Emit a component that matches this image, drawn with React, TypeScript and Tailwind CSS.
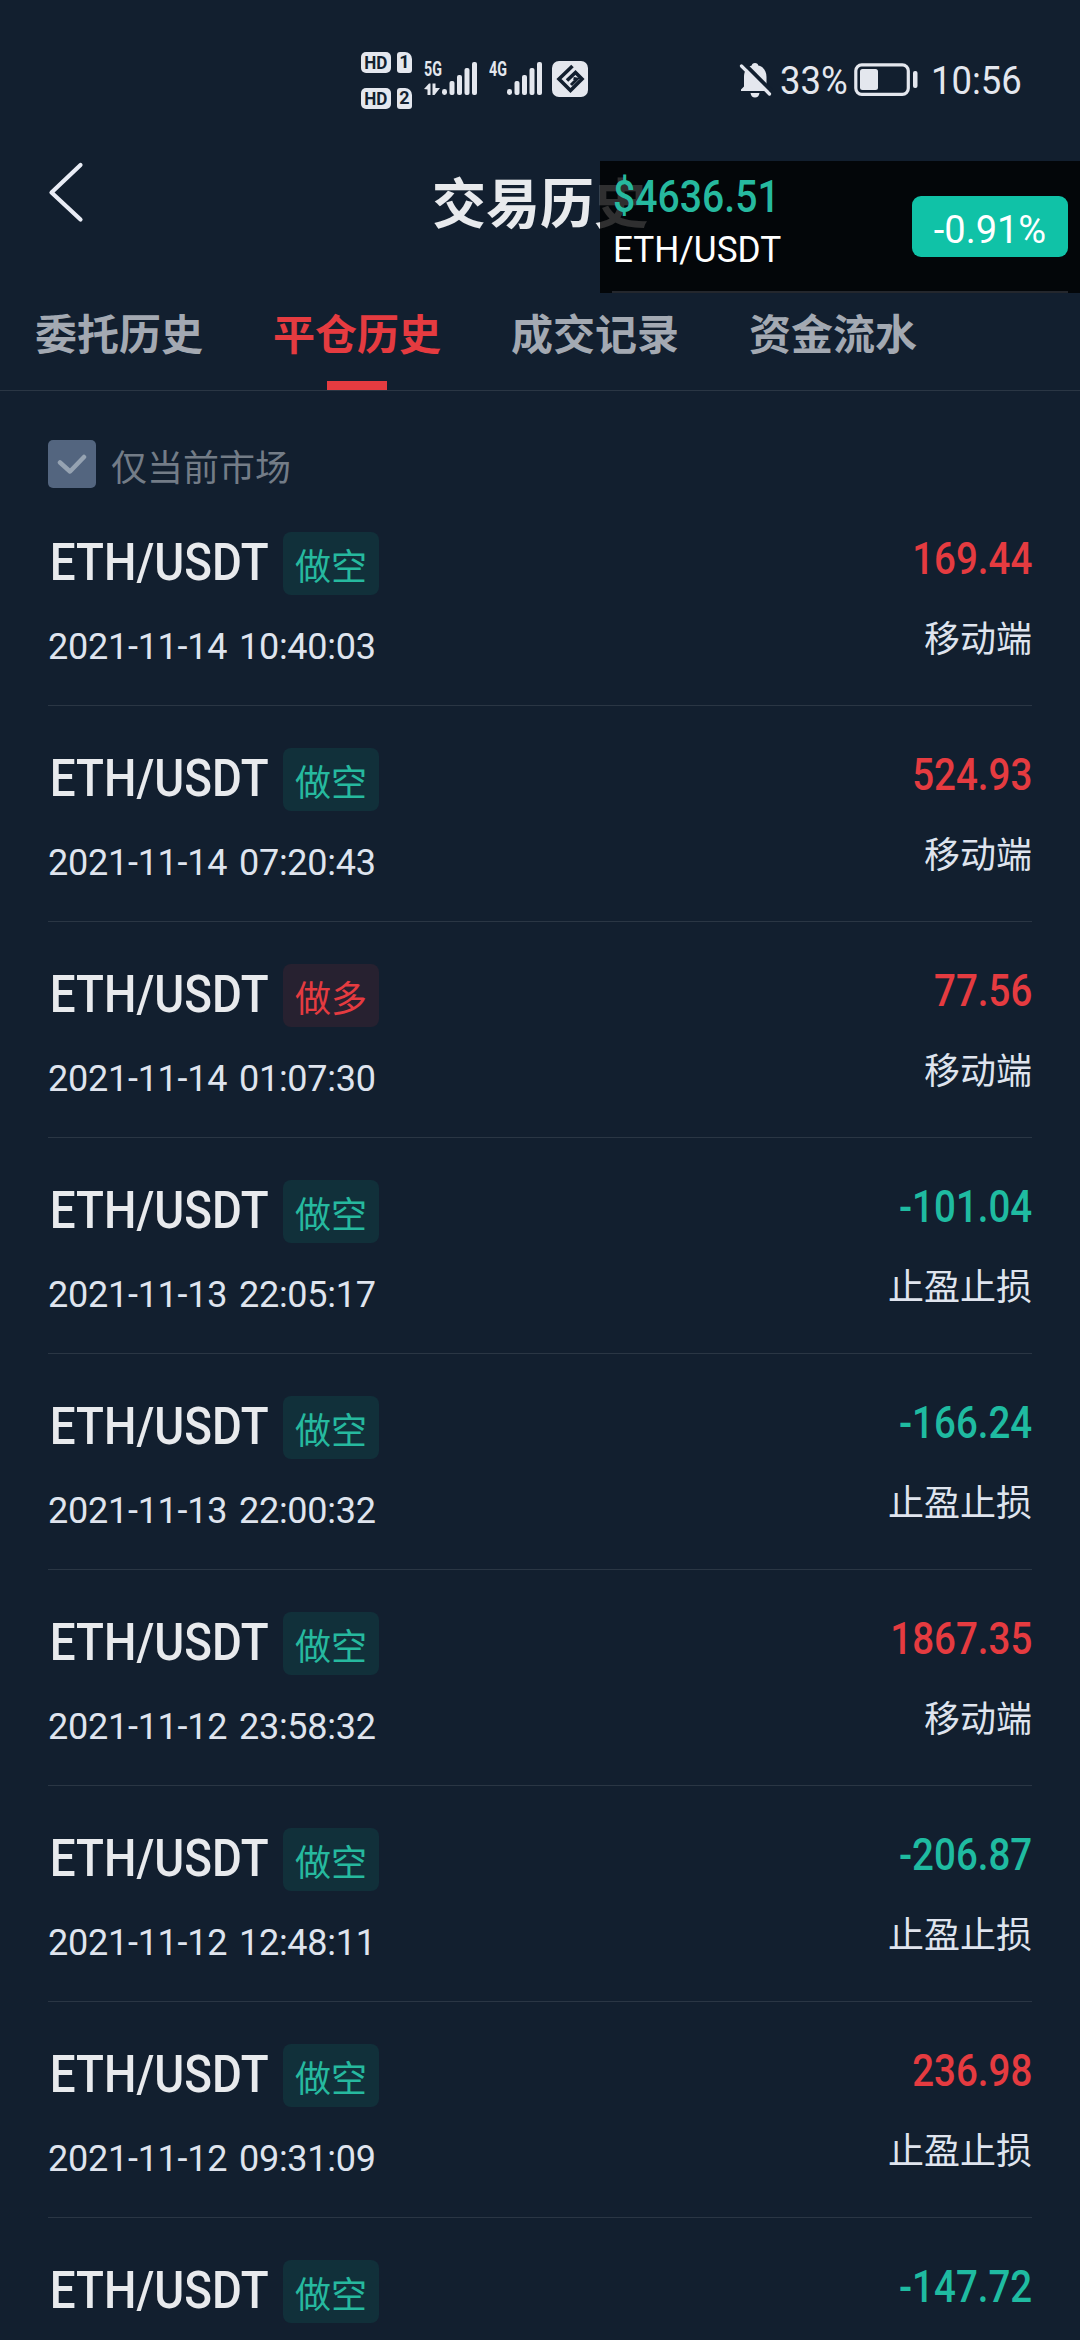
import { useState } from "react";

type Side = "short" | "long";

const tabs = ["委托历史", "平仓历史", "成交记录", "资金流水"];

const records: {
  side: Side;
  time: string;
  amount: string;
  source: string;
}[] = [
  { side: "short", time: "2021-11-14 10:40:03", amount: "169.44", source: "移动端" },
  { side: "short", time: "2021-11-14 07:20:43", amount: "524.93", source: "移动端" },
  { side: "long", time: "2021-11-14 01:07:30", amount: "77.56", source: "移动端" },
  { side: "short", time: "2021-11-13 22:05:17", amount: "-101.04", source: "止盈止损" },
  { side: "short", time: "2021-11-13 22:00:32", amount: "-166.24", source: "止盈止损" },
  { side: "short", time: "2021-11-12 23:58:32", amount: "1867.35", source: "移动端" },
  { side: "short", time: "2021-11-12 12:48:11", amount: "-206.87", source: "止盈止损" },
  { side: "short", time: "2021-11-12 09:31:09", amount: "236.98", source: "止盈止损" },
];

function SimLabel({ slot }: { slot: string }) {
  return (
    <div className="flex h-[22px] items-center gap-[6px] text-[#121f2f]">
      <span className="flex h-[21px] w-[30px] items-center justify-center rounded-[5px] bg-[#e4e7ee] text-[19px] leading-none font-bold">
        <span className="scale-x-[0.9]">HD</span>
      </span>
      <span className="flex h-[21px] w-[15px] items-center justify-center rounded-[3px] rounded-tr-[7px] bg-[#e4e7ee] text-[18px] leading-none font-bold">
        {slot}
      </span>
    </div>
  );
}

function Signal({ type, arrows }: { type: string; arrows?: boolean }) {
  return (
    <div className="relative h-[36px] w-[54px]">
      <span className="absolute top-0 left-0 origin-left scale-x-[0.68] text-[21px] leading-[18px] font-bold">
        {type}
      </span>
      <svg width="54" height="36" viewBox="0 0 54 36" fill="currentColor">
        {arrows && (
          <>
            <path d="M0 29 L5 23.500 H6.500 V35 H3.500 V29.500 Z" />
            <path d="M8.500 23.500 H11.500 V28 H16 L10.500 35 H8.500 Z" />
          </>
        )}
        <rect x="18" y="29" width="5" height="6" rx="2.4" />
        <rect x="25.5" y="21" width="5" height="14" rx="2" />
        <rect x="33" y="15" width="5" height="20" rx="2" />
        <rect x="40.5" y="8" width="5" height="27" rx="2" />
        <rect x="48" y="2" width="5" height="33" rx="2" />
      </svg>
    </div>
  );
}

function StatusBar() {
  return (
    <div className="flex h-[126px] items-start pt-[51px] pl-[361px] text-[#e4e7ee]">
      <div className="flex flex-col gap-[14px]">
        <SimLabel slot="1" />
        <SimLabel slot="2" />
      </div>
      <div className="mt-[9px] ml-[12px] flex gap-[11px]">
        <Signal type="5G" arrows />
        <Signal type="4G" />
      </div>
      <svg className="mt-[10px] ml-[9px]" width="36" height="36" viewBox="0 0 36 36" fill="none">
        <rect width="36" height="36" rx="7" fill="#e4e7ee" />
        <path d="M20.500 5 L7 18 L18.500 29.500 L30 18 L23.500 11.500 L15 19.500" stroke="#121f2f" strokeWidth="3.600" />
        <path d="M19 24 L25 18 L21.500 17.500" stroke="#121f2f" strokeWidth="3" />
      </svg>
      <svg className="mt-[12px] ml-[151px]" width="34" height="35" viewBox="0 0 34 35">
        <path
          d="M16 0 C18 0 19 1 19.3 2.6 C25 4 27.5 8.500 27.500 14 V23 L31 28 H2 V26.500 L5 23.500 V14 C5 8.500 7.500 4 12.700 2.600 C13 1 14 0 16 0 Z M11.500 30 H20.500 C20 33 18.500 34.500 16 34.500 C13.500 34.500 12 33 11.500 30 Z"
          fill="currentColor"
        />
        <path d="M4.500 0 L33 28.500" stroke="#121f2f" strokeWidth="4" />
        <path d="M2.500 3 L30.500 31" stroke="currentColor" strokeWidth="3.200" strokeLinecap="round" />
      </svg>
      <span className="mt-[9px] ml-[7px] w-[67px] origin-left scale-x-[0.96] text-[38px] leading-[42px]">33%</span>
      <svg className="mt-[12px] ml-[7px]" width="64" height="34" viewBox="0 0 64 34">
        <rect x="1.800" y="1.800" width="52.500" height="29.500" rx="6" fill="none" stroke="currentColor" strokeWidth="3.200" />
        <rect x="6" y="6" width="18" height="21" rx="2.500" fill="currentColor" />
        <rect x="59" y="8" width="4.500" height="17" rx="2" fill="currentColor" />
      </svg>
      <span className="mt-[9px] ml-[13px] origin-left scale-x-[0.96] text-[38px] leading-[42px]">10:56</span>
    </div>
  );
}

function PriceWidget() {
  return (
    <div className="absolute top-[161px] right-0 h-[132px] w-[480px] bg-black/80 px-3">
      <div className="flex h-full items-start justify-between border-b-2 border-[#24272d]">
        <div className="flex flex-col pt-[11px] pl-[1px]">
          <span className="h-[50px] origin-left scale-x-[0.89] text-[44px] leading-[50px] font-medium text-[#26b99f]">
            $4636.51
          </span>
          <span className="mt-[6px] h-[44px] origin-left scale-x-[0.95] text-[37px] leading-[44px] font-normal text-white">
            ETH/USDT
          </span>
        </div>
        <div className="mt-[35px] flex h-[61px] w-[156px] items-center justify-center rounded-[9px] bg-[#10c2a7] pt-[6px] text-[38px] leading-none text-white">
          -0.91%
        </div>
      </div>
    </div>
  );
}

function PairTitle({ side }: { side: Side }) {
  return (
    <div className="flex h-[63px]">
      <span className="w-[235px] origin-left scale-x-[0.88] pl-[2px] text-[52px] leading-[62px] font-medium text-[#e8eaed]">
        ETH/USDT
      </span>
      <span
        className={`h-[63px] w-[96px] rounded-[8px] text-center font-['Noto_Sans_CJK_SC',sans-serif] text-[36px] leading-[64px] ${
          side === "short" ? "bg-[#11303a] text-[#26b99f]" : "bg-[#272130] text-[#e53b40]"
        }`}
      >
        {side === "short" ? "做空" : "做多"}
      </span>
    </div>
  );
}

function Amount({ value }: { value: string }) {
  return (
    <span
      className={`block origin-right scale-x-[0.875] text-[44px] leading-[50px] font-medium ${
        value.startsWith("-") ? "text-[#1fbba1]" : "text-[#e53b40]"
      }`}
    >
      {value}
    </span>
  );
}

export default function App() {
  const [activeTab, setActiveTab] = useState(1);
  const [onlyCurrent, setOnlyCurrent] = useState(true);

  return (
    <div className="relative h-[2340px] w-[1080px] overflow-hidden bg-[#121f2f] font-[Roboto,'Noto_Sans_CJK_SC',sans-serif]">
      <StatusBar />

      {/* Header */}
      <div className="grid h-[156px] grid-cols-3 items-start px-[48px]">
        <svg className="mt-[35px]" width="36" height="62" viewBox="0 0 36 62" fill="none">
          <path d="M32.500 4 L3.500 31.500 L32.500 58.500" stroke="#e9ecf5" strokeWidth="4.200" strokeLinecap="round" strokeLinejoin="round" />
        </svg>
        <h1 className="mt-[41px] text-center font-['Noto_Sans_CJK_SC',sans-serif] text-[54px] leading-[68px] font-bold text-[#e8eaed]">
          交易历史
        </h1>
      </div>

      {/* Tabs */}
      <div className="flex h-[109px] border-b border-[#2a3644]">
        {tabs.map((tab, index) => (
          <button
            key={tab}
            onClick={() => setActiveTab(index)}
            className={`flex w-[238px] flex-col items-center justify-between font-['Noto_Sans_CJK_SC',sans-serif] text-[42px] font-bold ${
              activeTab === index ? "text-[#e53b40]" : "text-[#a3a9b2]"
            }`}
          >
            <span className="pt-[20px] leading-[60px]">{tab}</span>
            {activeTab === index && <span className="h-[9px] w-[60px] bg-[#e53b40]" />}
          </button>
        ))}
      </div>

      {/* Market filter */}
      <div className="flex h-[99px] items-start pt-[49px] pl-[48px]">
        <button
          onClick={() => setOnlyCurrent(!onlyCurrent)}
          className="flex size-[48px] items-center justify-center rounded-[5px] bg-[#53657f]"
        >
          {onlyCurrent && (
            <svg width="30" height="22" viewBox="0 0 30 22" fill="none">
              <path d="M3 9.500 L13 18.500 L27 4" stroke="#96a3b2" strokeWidth="4.500" strokeLinecap="round" strokeLinejoin="round" />
            </svg>
          )}
        </button>
        <span className="ml-[15px] font-['Noto_Sans_CJK_SC',sans-serif] text-[36px] leading-[50px] text-[#737c87]">
          仅当前市场
        </span>
      </div>

      {/* Records */}
      <div className="px-[48px]">
        {records.map((item) => (
          <div key={item.time} className="flex h-[216px] justify-between border-b border-[#2a3644]">
            <div className="flex flex-col pt-[42px]">
              <PairTitle side={item.side} />
              <span className="mt-[30px] text-[36px] leading-[44px] tracking-[-0.25px] text-[#dfe4ee] [word-spacing:3px]">
                {item.time}
              </span>
            </div>
            <div className="flex flex-col items-end pt-[44px]">
              <Amount value={item.amount} />
              <span className="mt-[27px] font-['Noto_Sans_CJK_SC',sans-serif] text-[36px] leading-[50px] text-[#dfe4ee]">
                {item.source}
              </span>
            </div>
          </div>
        ))}

        {/* Next record, only its first line is in view */}
        <div className="flex h-[122px] justify-between">
          <div className="pt-[42px]">
            <PairTitle side="short" />
          </div>
          <div className="pt-[44px]">
            <Amount value="-147.72" />
          </div>
        </div>
      </div>

      <PriceWidget />
    </div>
  );
}
